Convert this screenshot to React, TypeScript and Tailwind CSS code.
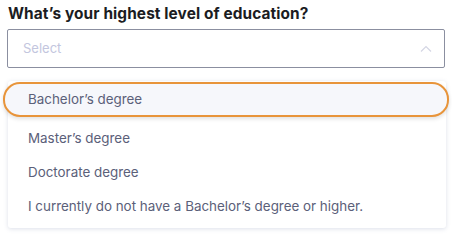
import React from 'react';

const options = [
    "Bachelor’s degree",
    "Master’s degree",
    "Doctorate degree",
    "I currently do not have a Bachelor’s degree or higher.",
];

export default function App() {
    return (
        <div className="w-[452px] h-[237px] bg-white pt-[3px] px-[7px] font-['Inter',sans-serif]">
            <p className="text-[15.4px] font-bold text-[#1b1c22] leading-[21px] pl-[1px] tracking-[0.1px]">What’s your highest level of education?</p>
            <div className="mt-[5px] h-[39px] border border-[#8b8fa0] rounded-[2px] flex items-center justify-between pl-[15px] pr-[12px]">
                <span className="text-[13px] text-[#c3c6de]">Select</span>
                <svg width="12" height="8" viewBox="0 0 12 8" fill="none" stroke="#d4d6e4" strokeWidth="1.2">
                    <path d="M1 6.5 L6 1.5 L11 6.5" />
                </svg>
            </div>
            <div className="mt-[13px] ml-[1px] w-[438px] h-[147px] rounded-[3px] bg-white shadow-[0_1px_4px_rgba(120,130,170,0.25)] pt-[1px]">
                {options.map((o, i) => (
                    <div
                        key={o}
                        className={
                            i === 0
                                ? "h-[35px] mb-[4px] -ml-[5px] -mr-[3px] rounded-[17px] border-[2.5px] border-[#e8943a] bg-[#f6f7fb] flex items-center pl-[23px] text-[13.4px] text-[#5b6079] shadow-[0_2px_4px_rgba(0,0,0,0.12)]"
                                : "h-[34px] flex items-center pl-[20px] text-[13.4px] text-[#5b6079]"
                        }
                    >
                        {o}
                    </div>
                ))}
            </div>
        </div>
    );
}
